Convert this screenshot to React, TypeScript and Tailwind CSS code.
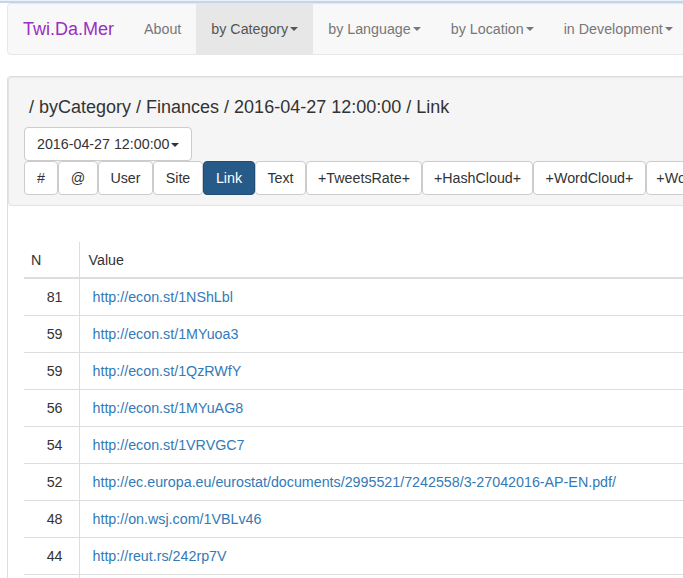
const navItems = [
  { label: "by Category", active: true },
  { label: "by Language" },
  { label: "by Location" },
  { label: "in Development" },
];

const tabs = [
  { label: "#", width: "w-[34px]" },
  { label: "@", width: "w-[40px]" },
  { label: "User", width: "w-[55px]" },
  { label: "Site", width: "w-[50px]" },
  { label: "Link", width: "w-[52px]" },
  { label: "Text", width: "w-[51px]" },
  { label: "+TweetsRate+", width: "w-[116px]" },
  { label: "+HashCloud+", width: "w-[111px]" },
  { label: "+WordCloud+", width: "w-[113px]" },
  { label: "+WordTree+", width: "w-[100px]" },
];

const rows = [
  ["81", "http://econ.st/1NShLbl"],
  ["59", "http://econ.st/1MYuoa3"],
  ["59", "http://econ.st/1QzRWfY"],
  ["56", "http://econ.st/1MYuAG8"],
  ["54", "http://econ.st/1VRVGC7"],
  ["52", "http://ec.europa.eu/eurostat/documents/2995521/7242558/3-27042016-AP-EN.pdf/"],
  ["48", "http://on.wsj.com/1VBLv46"],
  ["44", "http://reut.rs/242rp7V"],
  ["", ""],
];

function Caret() {
  return <span className="ml-[2px] inline-block align-middle border-x-[4px] border-t-[4px] border-x-transparent border-t-current" />;
}

function App() {
  return (
    <div className="h-[578px] w-[683px] overflow-hidden bg-white font-['Liberation_Sans',Arial,sans-serif] text-[14.27px] leading-[20px] text-[#333]">
      <div className="h-[3px] border-b-2 border-[#c3d5e8] bg-[#e8f0f8]" />

      <div className="ml-[7px] flex h-[52px] w-[760px] items-stretch rounded-[4px] border border-[#e7e7e7] bg-[#f8f8f8] pl-[15px] text-[#777]">
        <a className="mr-[15px] flex items-center text-[18px] text-[#9a2fc0]">Twi.Da.Mer</a>
        <a className="flex items-center px-[15px] whitespace-nowrap">About</a>
        {navItems.map((item) => (
          <a
            key={item.label}
            className={
              item.active
                ? "flex items-center bg-[#e7e7e7] px-[15px] whitespace-nowrap text-[#555]"
                : "flex items-center px-[15px] whitespace-nowrap"
            }
          >
            {item.label}
            <Caret />
          </a>
        ))}
      </div>

      <div className="ml-[7px] mt-[21px] min-h-[510px] w-[800px] rounded-tl-[4px] border-l border-[#ddd]">
        <div className="h-[130px] rounded-[4px] border border-[#e3e3e3] border-t-[#dcdcdc] bg-[#f5f5f5] pl-[15px] pt-[20px] shadow-[inset_0_1px_1px_rgba(0,0,0,0.05)]">
          <h4 className="ml-[5px] h-[30px] text-[18px] leading-[20px] whitespace-nowrap">/ byCategory / Finances / 2016-04-27 12:00:00 / Link</h4>
          <button className="block h-[34px] w-[168px] rounded-[4px] border border-[#ccc] bg-white text-left pl-[12px] whitespace-nowrap">
            2016-04-27 12:00:00
            <Caret />
          </button>
          <div className="flex">
            {tabs.map((t) => (
              <button
                key={t.label}
                className={
                  t.label === "Link"
                    ? `h-[34px] shrink-0 rounded-[4px] border border-[#204d74] bg-[#265a88] text-center whitespace-nowrap text-white ${t.width}`
                    : `h-[34px] shrink-0 rounded-[4px] border border-[#ccc] bg-white text-center whitespace-nowrap ${t.width}`
                }
              >
                {t.label}
              </button>
            ))}
          </div>
        </div>

        <table className="ml-[16px] mt-[36px] w-[760px] border-collapse">
          <thead>
            <tr className="h-[36px]">
              <th className="w-[55px] border-r border-b-2 border-[#ddd] pl-[7px] text-left font-normal">N</th>
              <th className="border-b-2 border-[#ddd] pl-[9px] text-left font-normal">Value</th>
            </tr>
          </thead>
          <tbody>
            {rows.map(([n, url], i) => (
              <tr key={i} className="h-[37px] border-b border-[#ddd]">
                <td className="border-r border-[#ddd] pr-[16px] text-right">{n}</td>
                <td className="pl-[13px]">
                  <a className="text-[#337ab7]">{url}</a>
                </td>
              </tr>
            ))}
          </tbody>
        </table>
      </div>
    </div>
  );
}

export default App;
